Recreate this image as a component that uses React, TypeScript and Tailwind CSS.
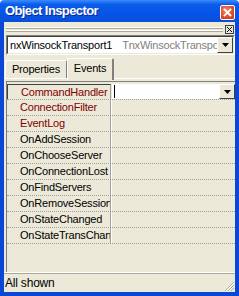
import React from "react";

const rows = [
  { name: "CommandHandler", red: true },
  { name: "ConnectionFilter", red: true },
  { name: "EventLog", red: true },
  { name: "OnAddSession" },
  { name: "OnChooseServer" },
  { name: "OnConnectionLost" },
  { name: "OnFindServers" },
  { name: "OnRemoveSession" },
  { name: "OnStateChanged" },
  { name: "OnStateTransChanged" },
];

function DropButton() {
  return (
    <div className="w-[16px] h-full flex items-center justify-center bg-[#ece9d8] border border-t-white border-l-white border-r-[#404040] border-b-[#404040] shrink-0">
      <svg width="7" height="4" viewBox="0 0 7 4">
        <path d="M0 0h7L3.5 4z" fill="#000" />
      </svg>
    </div>
  );
}

export default function App() {
  return (
    <div className="w-[239px] h-[296px] flex flex-col font-['Liberation_Sans',Arial,sans-serif] text-[11px] tracking-[-0.2px] text-black select-none">
      {/* Title bar */}
      <div className="h-[22px] shrink-0 flex items-center justify-between pl-[5px] pr-[4px] bg-[linear-gradient(180deg,#3d8bff_0%,#0a5de9_20%,#0553e6_70%,#0a4fd8_100%)] rounded-t-[4px]">
        <span className="text-white font-bold text-[13px] tracking-[-0.6px] [text-shadow:1px_1px_0_#0a2a9c]">
          Object Inspector
        </span>
        <div className="w-[15px] h-[15px] mt-[2px] rounded-[2px] border border-white bg-[radial-gradient(circle_at_40%_35%,#f08a6a,#d9401f_70%)] flex items-center justify-center">
          <svg width="9" height="9" viewBox="0 0 9 9">
            <path d="M1.5 1.5l6 6M7.5 1.5l-6 6" stroke="#fff" strokeWidth="1.8" strokeLinecap="square" />
          </svg>
        </div>
      </div>

      {/* Window frame */}
      <div className="flex-1 flex flex-col border-x-4 border-b-4 border-[#0b47d6] bg-[#ece9d8] min-h-0">
        {/* Grab bar */}
        <div className="h-[12px] flex items-center pl-[2px] pr-[1px] gap-[2px] mt-[1px]">
          <div className="flex-1 flex flex-col gap-[1px]">
            <div className="h-[2px] border-t border-t-white border-b border-b-[#aca899]" />
            <div className="h-[2px] border-t border-t-white border-b border-b-[#aca899]" />
          </div>
          <div className="w-[9px] h-[9px] border border-[#404040] bg-[#ece9d8] flex items-center justify-center">
            <svg width="5" height="5" viewBox="0 0 5 5">
              <path d="M0 0l5 5M5 0l-5 5" stroke="#000" strokeWidth="1" />
            </svg>
          </div>
        </div>

        {/* Combo */}
        <div className="ml-[2px] h-[20px] flex border border-t-[#808080] border-l-[#808080] border-r-white border-b-white">
          <div className="flex-1 flex border border-t-[#404040] border-l-[#404040] border-r-[#ece9d8] border-b-[#ece9d8] bg-white min-w-0">
            <div className="flex-1 flex items-center pl-[2px] whitespace-nowrap overflow-hidden">
              <span>nxWinsockTransport1</span>
              <span className="ml-[10px] text-[#808080]">TnxWinsockTransport</span>
            </div>
            <DropButton />
          </div>
        </div>

        {/* Tabs */}
        <div className="mt-[2px] h-[23px] flex items-end pl-[1px] relative">
          <div className="h-[18px] w-[62px] flex items-center justify-center bg-[#ece9d8] border-t border-l border-white border-r border-r-[#808080] rounded-t-[2px] mb-[2px]">
            Properties
          </div>
          <div className="h-[22px] w-[47px] flex items-center justify-center bg-[#ece9d8] border-t border-l border-white border-r-2 border-r-[#808080] rounded-t-[2px] pb-[2px] relative z-10">
            Events
          </div>
          <div className="absolute left-0 right-0 bottom-[1px] border-b border-white" />
        </div>

        {/* Grid */}
        <div className="mt-[1px] ml-[2px] flex-1 flex flex-col border-l border-t border-[#808080] min-h-0">
          <div className="flex flex-col pt-[2px]">
            {rows.map((r, i) => {
              const sel = i === 0;
              return (
                <div key={r.name} className="h-[16px] flex border-b border-dotted border-[#a0a0a0]">
                  <div
                    className={
                      "w-[104px] shrink-0 flex items-center pl-[13px] whitespace-nowrap overflow-hidden border-r border-[#a0a0a0] " +
                      (sel ? "border-t border-l border-t-[#404040] border-l-[#404040] pl-[12px]" : "")
                    }
                  >
                    <span className={r.red ? "text-[#800000]" : "text-black"}>{r.name}</span>
                  </div>
                  {sel ? (
                    <div className="flex-1 flex bg-white ml-[1px]">
                      <div className="flex-1 flex items-center pl-[2px]">
                        <div className="w-[1px] h-[13px] bg-black" />
                      </div>
                      <DropButton />
                    </div>
                  ) : (
                    <div className="flex-1 border-l border-white" />
                  )}
                </div>
              );
            })}
          </div>
          <div className="flex-1" />
        </div>

        {/* Status bar */}
        <div className="h-[19px] shrink-0 flex items-center justify-between border-t border-t-[#aca899] relative before:absolute before:left-0 before:right-0 before:-top-[2px] before:h-[1px] before:bg-white">
          <span className="pl-[1px] text-[12px]">All shown</span>
          <svg width="11" height="11" viewBox="0 0 11 11" className="self-end">
            <path d="M10 1L1 10M10 4L4 10M10 7L7 10" stroke="#aca899" strokeWidth="1" />
            <path d="M10 2L2 10M10 5L5 10M10 8L8 10" stroke="#fff" strokeWidth="1" />
          </svg>
        </div>
      </div>
    </div>
  );
}
